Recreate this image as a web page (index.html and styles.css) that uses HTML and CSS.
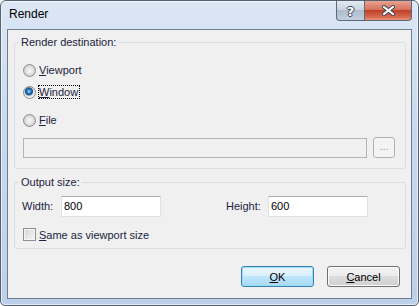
FILE: index.html
```html
<!DOCTYPE html>
<html lang="en">
<head>
    <meta charset="UTF-8">
    <title>Render</title>
    <link rel="stylesheet" href="styles.css">
</head>
<body>

    <div class="window">
        <div class="titlebar">
            <span class="title">Render</span>
            <div class="caption-buttons">
                <button class="cap help">?</button>
                <button class="cap close">
                    <svg width="13" height="11" viewBox="0 0 13 11">
                        <path d="M2 2 L11 9 M11 2 L2 9" stroke="#3b4452" stroke-width="4" stroke-linecap="square"/>
                        <path d="M2 2 L11 9 M11 2 L2 9" stroke="#fff" stroke-width="2" stroke-linecap="square"/>
                    </svg>
                </button>
            </div>
        </div>

        <div class="client">
            <fieldset class="group">
                <legend>Render destination:</legend>
                <div class="group-body dest">
                    <label class="radio-row"><span class="radio"></span><span class="caption"><u>V</u>iewport</span></label>
                    <label class="radio-row second"><span class="radio checked"></span><span class="caption focused"><u>W</u>indow</span></label>
                    <label class="radio-row third"><span class="radio"></span><span class="caption"><u>F</u>ile</span></label>
                    <div class="path-row">
                        <span class="textbox disabled path"></span>
                        <span class="browse">...</span>
                    </div>
                </div>
            </fieldset>

            <fieldset class="group output">
                <legend>Output size:</legend>
                <div class="group-body size">
                    <div class="size-row">
                        <span class="field-label width-label">Width:</span>
                        <span class="textbox num">800</span>
                        <span class="field-label height-label">Height:</span>
                        <span class="textbox num">600</span>
                    </div>
                    <label class="check-row"><span class="checkbox"></span><span class="caption"><u>S</u>ame as viewport size</span></label>
                </div>
            </fieldset>

            <div class="buttons">
                <button class="btn default"><u>O</u>K</button>
                <button class="btn"><u>C</u>ancel</button>
            </div>
        </div>
    </div>

</body>
</html>
```

FILE: styles.css
```css
body {
    margin: 0;
    background: #fff;
    font-family: "Liberation Sans", Arial, sans-serif;
    font-size: 11px;
    color: #1b2440;
}
.window {
    box-sizing: border-box;
    width: 419px;
    height: 306px;
    border: 1px solid #56626f;
    border-radius: 6px 6px 5px 5px;
    background: linear-gradient(#dce7f5, #c9daee 40%, #bcd0e9);
    box-shadow: inset 0 0 0 1px rgba(255, 255, 255, 0.55);
    overflow: hidden;
}
.titlebar {
    height: 28px;
    display: flex;
    align-items: flex-start;
}
.title {
    font-size: 12px;
    color: #000;
    margin: 6px 0 0 8px;
    line-height: 14px;
}
.caption-buttons {
    margin-left: auto;
    margin-right: 6px;
    display: flex;
}
.cap {
    box-sizing: border-box;
    height: 20px;
    margin: 0;
    padding: 0;
    border: 1px solid #5b6877;
    border-top: none;
    display: flex;
    align-items: center;
    justify-content: center;
}
.help {
    width: 28px;
    border-radius: 0 0 0 4px;
    border-right: none;
    background: linear-gradient(#e3eaf2, #c9d4e0 45%, #aebccb 50%, #c3d0dd);
    font-family: "DejaVu Sans", sans-serif;
    font-weight: bold;
    font-size: 13px;
    color: #fff;
    text-shadow: 1px 0 0 #3b4452, -1px 0 0 #3b4452, 0 1px 0 #3b4452, 0 -1px 0 #3b4452;
    padding-top: 1px;
}
.close {
    width: 48px;
    border-radius: 0 0 4px 0;
    background: linear-gradient(#e8a493, #d7725d 45%, #c2402a 50%, #d86a4f 85%, #e79a7d);
}
.client {
    box-sizing: border-box;
    height: 270px;
    margin: 0 6px;
    border: 1px solid #6f7e8f;
    background: #f0f0f0;
    padding: 6px 5px 0 6px;
}
.group {
    margin: 0;
    padding: 0;
    border: 1px solid #d5dfe5;
    border-radius: 3px;
    min-width: 0;
}
.group legend {
    margin-left: 4px;
    padding: 0 2px;
    line-height: 13px;
}
.output {
    margin-top: 7px;
}
.dest {
    padding: 11px 0 10px 8px;
}
.radio-row {
    display: flex;
    align-items: center;
    height: 20px;
}
.second {
    margin-top: 2px;
}
.third {
    margin-top: 8px;
}
.radio {
    box-sizing: border-box;
    width: 13px;
    height: 13px;
    border-radius: 50%;
    border: 1px solid #8b8d90;
    background: radial-gradient(circle at 50% 50%, #f6f6f6 0, #e9e9e9 3px, #d3d3d3 5px);
    margin-right: 2px;
}
.radio.checked {
    background: radial-gradient(circle at 45% 40%, #b6e4ff 0, #3b8fd1 1.5px, #144f8c 3.5px, #6a8aa8 4px, #d9d9d9 4.5px, #f3f3f3 6px);
}
.caption {
    border: 1px solid transparent;
    line-height: 12px;
}
.caption.focused {
    border: 1px dotted #000;
    padding-right: 1px;
}
.path-row {
    margin-top: 7px;
    height: 21px;
    display: flex;
    align-items: flex-end;
}
.textbox {
    box-sizing: border-box;
    height: 20px;
    background: #fff;
    border: 1px solid #dde2e8;
    border-top-color: #abadb3;
    padding: 3px 0 0 2px;
    color: #000;
    font-size: 11px;
}
.textbox.disabled {
    background: #f0f0f0;
    border-color: #afb4b8;
}
.path {
    width: 344px;
}
.browse {
    box-sizing: border-box;
    width: 22px;
    height: 21px;
    margin-left: 6px;
    border: 1px solid #adb2b5;
    border-radius: 3px;
    background: #f4f4f4;
    color: #9a9a9a;
    text-align: center;
    line-height: 17px;
}
.size {
    padding: 7px 0 7px 7px;
}
.size-row {
    display: flex;
    align-items: center;
    height: 21px;
}
.size-row .textbox {
    height: 21px;
}
.field-label {
    line-height: 13px;
}
.width-label {
    width: 39px;
}
.height-label {
    width: 42px;
    margin-left: 65px;
}
.num {
    width: 100px;
}
.check-row {
    display: flex;
    align-items: center;
    height: 13px;
    margin-top: 11px;
    margin-left: 1px;
}
.checkbox {
    box-sizing: border-box;
    width: 13px;
    height: 13px;
    border: 1px solid #8e8f8f;
    background: linear-gradient(135deg, #d6d6d6, #f6f6f6);
    box-shadow: inset 0 0 0 1px #f4f4f4;
    margin-right: 2px;
}
.buttons {
    display: flex;
    justify-content: flex-end;
    gap: 13px;
    margin-top: 17px;
    margin-right: 6px;
}
.btn {
    box-sizing: border-box;
    width: 73px;
    height: 21px;
    margin: 0;
    padding: 0;
    border: 1px solid #707070;
    border-radius: 3px;
    background: linear-gradient(#f2f2f2, #ebebeb 50%, #dddddd 50%, #cfcfcf);
    box-shadow: inset 0 0 0 1px #fcfcfc;
    font-family: "Liberation Sans", Arial, sans-serif;
    font-size: 11px;
    color: #000;
}
.btn.default {
    border-color: #3c7fb1;
    background: linear-gradient(#eaf6fd, #d9f0fc 50%, #bee6fd 50%, #a7d9f5);
    box-shadow: inset 0 0 0 1px #98e0fa;
}
```
